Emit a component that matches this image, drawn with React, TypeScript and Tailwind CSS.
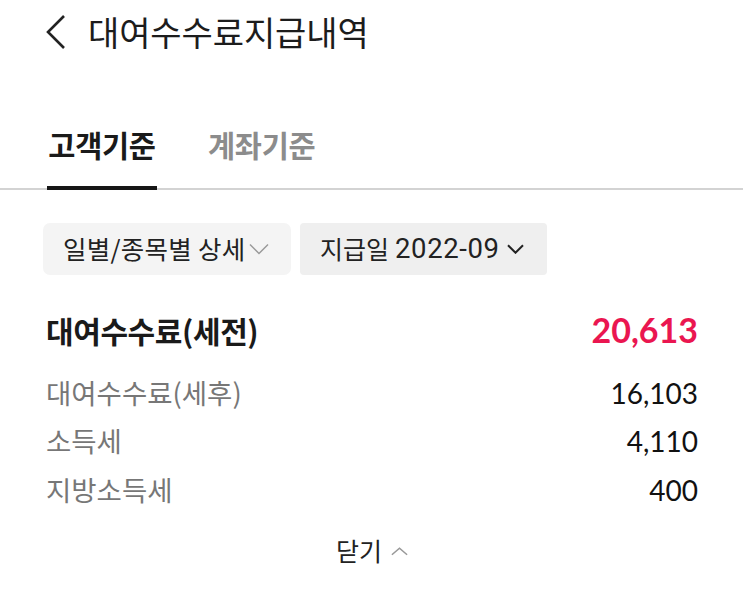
const KR = "font-['Noto_Sans_CJK_KR','Noto_Sans',sans-serif]";
const NUM = "font-['Lato','Noto_Sans_CJK_KR',sans-serif]";

const ChevronDown = ({ className }: { className?: string }) => (
  <svg viewBox="0 0 20 12" className={className} fill="none" stroke="currentColor" strokeWidth={2}>
    <path d="M1 1.5l9 9 9-9" />
  </svg>
);

const rows = [
  { label: "대여수수료(세후)", value: "16,103" },
  { label: "소득세", value: "4,110" },
  { label: "지방소득세", value: "400" },
];

export default function App() {
  return (
    <div className={`w-[743px] h-[597px] bg-white text-[#1a1a1a] ${KR}`}>
      {/* header */}
      <div className="h-[64px] flex items-center pl-[44px]">
        <svg viewBox="0 0 22 36" className="w-[22px] h-[36px] text-[#222]" fill="none" stroke="currentColor" strokeWidth={2.6}>
          <path d="M20 2L4 18l16 16" />
        </svg>
        <h1 className="ml-[22px] text-[34px] leading-none tracking-[-0.1px] text-[#1c1c1c]">대여수수료지급내역</h1>
      </div>

      {/* tabs */}
      <div className="mt-[66px] flex border-b-2 border-[#d3d3d3] pl-[47px] gap-[51px]">
        <div className="-mb-[2px] border-b-4 border-[#161616] pb-[26px] w-[110px] text-center text-[29.5px] font-bold leading-none tracking-[-0.3px]">
          고객기준
        </div>
        <div className="pb-[26px] text-[29.5px] font-bold leading-none tracking-[-0.3px] text-[#8c8c8c]">계좌기준</div>
      </div>

      {/* filters */}
      <div className="mt-[33px] flex gap-[9px] pl-[43px]">
        <div className="h-[52px] w-[248px] rounded-[7px] bg-[#f4f4f4] flex items-center pl-[20px] text-[25.5px] tracking-[0.3px] text-[#222]">
          일별/종목별 상세
          <ChevronDown className="ml-[3px] w-[20px] h-[12px] text-[#9a9a9a] stroke-[1.5]" />
        </div>
        <div className="h-[52px] w-[247px] rounded-[4px] bg-[#efefef] flex items-center pl-[20px] text-[25px] text-[#222]">
          지급일 <span className="ml-[6px] font-['Roboto',sans-serif] text-[27.5px] tracking-[0.6px]">2022-09</span>
          <ChevronDown className="ml-[7px] w-[17px] h-[10px] text-[#222] stroke-[2.4]" />
        </div>
      </div>

      {/* summary */}
      <div className="mt-[37px] pl-[46px] pr-[45px]">
        <div className="flex items-center justify-between h-[36px]">
          <span className="text-[30px] font-bold leading-none tracking-[-0.4px]">대여수수료(세전)</span>
          <span className={`${NUM} text-[34px] font-bold leading-none text-[#ea1650]`}>20,613</span>
        </div>
        <div className="mt-[27px] flex flex-col gap-[12.5px]">
          {rows.map((r) => (
            <div key={r.label} className="flex items-center justify-between h-[36px]">
              <span className="text-[27.5px] leading-none text-[#777]">{r.label}</span>
              <span className={`${NUM} text-[28px] leading-none text-[#111]`}>{r.value}</span>
            </div>
          ))}
        </div>
      </div>

      {/* close */}
      <div className="mt-[30px] flex items-center justify-center gap-[8px] pl-[2px]">
        <span className="text-[25px] leading-none text-[#222]">닫기</span>
        <svg viewBox="0 0 20 10" className="w-[19px] h-[10px] text-[#999] mt-[2px]" fill="none" stroke="currentColor" strokeWidth={1.6}>
          <path d="M2 9l8-7 8 7" />
        </svg>
      </div>
    </div>
  );
}
